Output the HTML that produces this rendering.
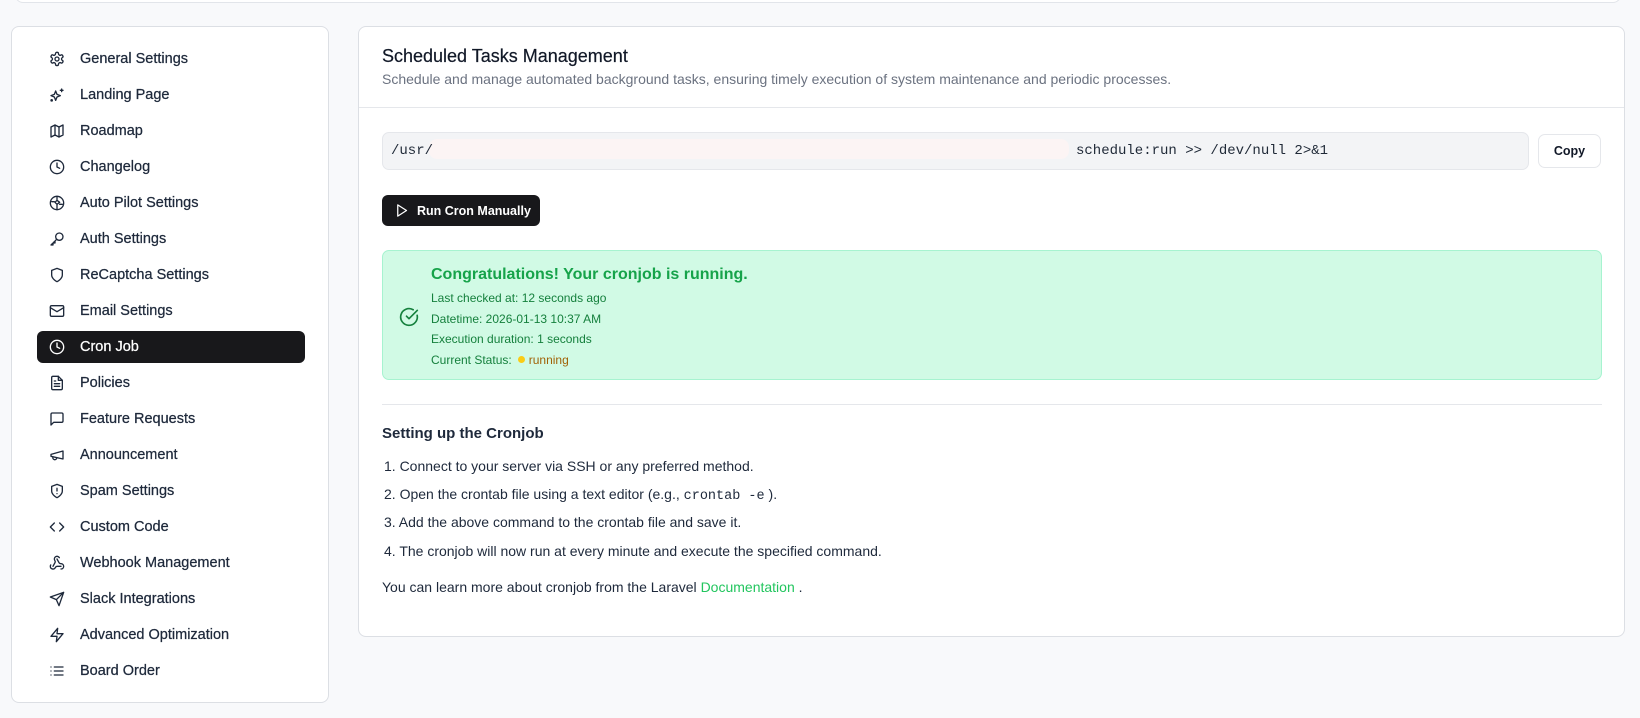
<!DOCTYPE html>
<html><head><meta charset="utf-8"><style>
*{box-sizing:border-box;margin:0;padding:0}
body{width:1640px;height:718px;background:#f8f9fb;font-family:"Liberation Sans",sans-serif;color:#1e293b;position:relative;overflow:hidden}
.top{position:absolute;left:15px;top:-10px;width:1606px;height:13px;background:#fff;border:1px solid #e2e5ea;border-radius:0 0 8px 8px}
.side{position:absolute;left:11px;top:26px;width:318px;height:677px;background:#fff;border:1px solid #dcdfe4;border-radius:8px}
.item{position:absolute;left:25px;width:268px;height:32px;display:flex;align-items:center;font-size:14.5px;font-weight:500;color:#1e293b;-webkit-text-stroke:0.25px #1e293b}
.item svg{position:absolute;left:12px;width:16px;height:16px;fill:none;stroke:#1e293b;stroke-width:2;stroke-linecap:round;stroke-linejoin:round}
.item span{position:absolute;left:43px}
.item.act{background:#18181b;color:#fff;border-radius:6px;-webkit-text-stroke:0.25px #fff}
.item.act svg{stroke:#fff}
.main{position:absolute;left:358px;top:26px;width:1267px;height:611px;background:#fff;border:1px solid #dcdfe4;border-radius:8px}
.abs{position:absolute}
.mono{font-family:"Liberation Mono",monospace}
.li{position:absolute;left:25px;font-size:14px;line-height:18px;color:#1e293b;white-space:nowrap}
</style></head><body>
<div class="top"></div>
<div class="side">
<div class="item" style="top:16px"><svg viewBox="0 0 24 24"><path d="M12.2 2h-.4a2 2 0 0 0-2 2v.2a2 2 0 0 1-1 1.7l-.4.3a2 2 0 0 1-2 0l-.2-.1a2 2 0 0 0-2.7.7l-.2.4a2 2 0 0 0 .7 2.7l.2.1a2 2 0 0 1 1 1.7v.5a2 2 0 0 1-1 1.7l-.2.1a2 2 0 0 0-.7 2.7l.2.4a2 2 0 0 0 2.7.7l.2-.1a2 2 0 0 1 2 0l.4.3a2 2 0 0 1 1 1.7v.2a2 2 0 0 0 2 2h.4a2 2 0 0 0 2-2v-.2a2 2 0 0 1 1-1.7l.4-.3a2 2 0 0 1 2 0l.2.1a2 2 0 0 0 2.7-.7l.2-.4a2 2 0 0 0-.7-2.7l-.2-.1a2 2 0 0 1-1-1.7v-.5a2 2 0 0 1 1-1.7l.2-.1a2 2 0 0 0 .7-2.7l-.2-.4a2 2 0 0 0-2.7-.7l-.2.1a2 2 0 0 1-2 0l-.4-.3a2 2 0 0 1-1-1.7V4a2 2 0 0 0-2-2z"/><circle cx="12" cy="12" r="3"/></svg><span>General Settings</span></div>
<div class="item" style="top:52px"><svg viewBox="0 0 24 24"><path d="M10 6l2 5 5 2-5 2-2 5-2-5-5-2 5-2z"/><path d="M19 3v4M17 5h4"/><circle cx="4" cy="20" r="1"/></svg><span>Landing Page</span></div>
<div class="item" style="top:88px"><svg viewBox="0 0 24 24"><path d="M3 6l6-3 6 3 6-3v15l-6 3-6-3-6 3z"/><path d="M9 3v15M15 6v15"/></svg><span>Roadmap</span></div>
<div class="item" style="top:124px"><svg viewBox="0 0 24 24"><circle cx="12" cy="12" r="10"/><path d="M12 6v6l4 2"/></svg><span>Changelog</span></div>
<div class="item" style="top:160px"><svg viewBox="0 0 24 24"><circle cx="12" cy="12" r="10"/><path d="M12 2v6l-3 3 3 3v8M12 8l4 3-4 3M4 10h4M16 14h4"/></svg><span>Auto Pilot Settings</span></div>
<div class="item" style="top:196px"><svg viewBox="0 0 24 24"><circle cx="15.5" cy="8.5" r="5.5"/><path d="M11.5 12.5L3 21l3 0 0-3 3 0 0-3"/></svg><span>Auth Settings</span></div>
<div class="item" style="top:232px"><svg viewBox="0 0 24 24"><path d="M12 22s8-4 8-10V5l-8-3-8 3v7c0 6 8 10 8 10z"/></svg><span>ReCaptcha Settings</span></div>
<div class="item" style="top:268px"><svg viewBox="0 0 24 24"><rect x="2" y="4" width="20" height="16" rx="2"/><path d="M22 7l-10 6L2 7"/></svg><span>Email Settings</span></div>
<div class="item act" style="top:304px"><svg viewBox="0 0 24 24"><circle cx="12" cy="12" r="10"/><path d="M12 6v6l4 2"/></svg><span>Cron Job</span></div>
<div class="item" style="top:340px"><svg viewBox="0 0 24 24"><path d="M14 2H6a2 2 0 0 0-2 2v16a2 2 0 0 0 2 2h12a2 2 0 0 0 2-2V8z"/><path d="M14 2v6h6M8 13h8M8 17h8M8 9h2"/></svg><span>Policies</span></div>
<div class="item" style="top:376px"><svg viewBox="0 0 24 24"><path d="M21 15a2 2 0 0 1-2 2H7l-4 4V5a2 2 0 0 1 2-2h14a2 2 0 0 1 2 2z"/></svg><span>Feature Requests</span></div>
<div class="item" style="top:412px"><svg viewBox="0 0 24 24"><path d="M3 11l18-5v12L3 14z"/><path d="M11.6 16.8a3 3 0 1 1-5.8-1.6"/></svg><span>Announcement</span></div>
<div class="item" style="top:448px"><svg viewBox="0 0 24 24"><path d="M12 22s8-4 8-10V5l-8-3-8 3v7c0 6 8 10 8 10z"/><path d="M12 8v4M12 16h.01"/></svg><span>Spam Settings</span></div>
<div class="item" style="top:484px"><svg viewBox="0 0 24 24"><path d="M16 18l6-6-6-6M8 6l-6 6 6 6"/></svg><span>Custom Code</span></div>
<div class="item" style="top:520px"><svg viewBox="0 0 24 24"><path d="M18 16.98h-5.99c-1.1 0-1.95.94-2.48 1.9A4 4 0 0 1 2 17c.01-.7.2-1.4.57-2"/><path d="M6 17l3.13-5.78c.53-.97.1-2.180-.5-3.1a4 4 0 1 1 6.89-4.06"/><path d="M12 6l3.13 5.73C15.66 12.7 16.9 13 18 13a4 4 0 0 1 0 8"/></svg><span>Webhook Management</span></div>
<div class="item" style="top:556px"><svg viewBox="0 0 24 24"><path d="M22 2L11 13M22 2l-7 20-4-9-9-4z"/></svg><span>Slack Integrations</span></div>
<div class="item" style="top:592px"><svg viewBox="0 0 24 24"><path d="M13 2L3 14h9l-1 8 10-12h-9z"/></svg><span>Advanced Optimization</span></div>
<div class="item" style="top:628px"><svg viewBox="0 0 24 24"><path d="M8 6h13M8 12h13M8 18h13M3 6h.01M3 12h.01M3 18h.01"/></svg><span>Board Order</span></div>
</div>

<div class="main">
<div class="abs" style="left:23px;top:19px;font-size:18px;font-weight:500;color:#111827;-webkit-text-stroke:0.2px #111827">Scheduled Tasks Management</div>
<div class="abs" style="left:23px;top:44px;font-size:14px;color:#6b7280">Schedule and manage automated background tasks, ensuring timely execution of system maintenance and periodic processes.</div>
<div class="abs" style="left:0;top:80px;width:1265px;border-top:1px solid #e5e7eb"></div>
<div class="abs" style="left:23px;top:105px;width:1147px;height:38px;background:#f3f4f6;border:1px solid #e5e7eb;border-radius:7px"></div>
<div class="abs" style="left:70px;top:112px;width:640px;height:20px;background:#fff3f3;border-radius:8px;opacity:.7"></div>
<div class="abs mono" style="left:32px;top:116px;font-size:14px;color:#1f2937">/usr/</div>
<div class="abs mono" style="left:717px;top:116px;font-size:14px;color:#1f2937">schedule:run &gt;&gt; /dev/null 2&gt;&amp;1</div>
<div class="abs" style="left:1179px;top:107px;width:63px;height:34px;border:1px solid #e5e7eb;border-radius:7px;font-size:12.5px;font-weight:600;display:flex;align-items:center;justify-content:center;color:#111827">Copy</div>
<div class="abs" style="left:23px;top:168px;width:158px;height:31px;background:#18181b;border-radius:6px;color:#fff;font-size:12.5px;font-weight:600;display:flex;align-items:center"><svg style="position:absolute;left:12px" width="15" height="15" viewBox="0 0 24 24" fill="none" stroke="#fff" stroke-width="2" stroke-linejoin="round"><path d="M6 3l14 9-14 9z"/></svg><span style="position:absolute;left:35px">Run Cron Manually</span></div>
<div class="abs" style="left:23px;top:223px;width:1220px;height:130px;background:#d1fae5;border:1px solid #a7f3d0;border-radius:7px"></div>
<svg class="abs" style="left:40px;top:280px" width="20" height="20" viewBox="0 0 24 24" fill="none" stroke="#15803d" stroke-width="2" stroke-linecap="round" stroke-linejoin="round"><path d="M21.8 10A10 10 0 1 1 17 3.3"/><path d="M9 11l3 3L22 4"/></svg>
<div class="abs" style="left:72px;top:239px;font-size:16px;font-weight:600;color:#16a34a">Congratulations! Your cronjob is running.</div>
<div class="abs" style="left:72px;top:261px;font-size:12px;line-height:20.5px;color:#15803d">Last checked at: 12 seconds ago<br>Datetime: 2026-01-13 10:37 AM<br>Execution duration: 1 seconds<br>Current Status: &nbsp;<span style="display:inline-block;width:7px;height:7px;border-radius:50%;background:#facc15;vertical-align:1px"></span> <span style="color:#a16207">running</span></div>
<div class="abs" style="left:23px;top:377px;width:1220px;border-top:1px solid #e5e7eb"></div>
<div class="abs" style="left:23px;top:398px;font-size:15px;font-weight:600;color:#1e293b">Setting up the Cronjob</div>
<div class="li" style="top:430px">1. Connect to your server via SSH or any preferred method.</div>
<div class="li" style="top:458px">2. Open the crontab file using a text editor (e.g., <span class="mono" style="font-size:13.5px">crontab -e</span> ).</div>
<div class="li" style="top:486px">3. Add the above command to the crontab file and save it.</div>
<div class="li" style="top:515px">4. The cronjob will now run at every minute and execute the specified command.</div>
<div class="abs" style="left:23px;top:552px;font-size:14px;color:#1e293b">You can learn more about cronjob from the Laravel <span style="color:#22c55e">Documentation</span> .</div>
</div>
</body></html>
